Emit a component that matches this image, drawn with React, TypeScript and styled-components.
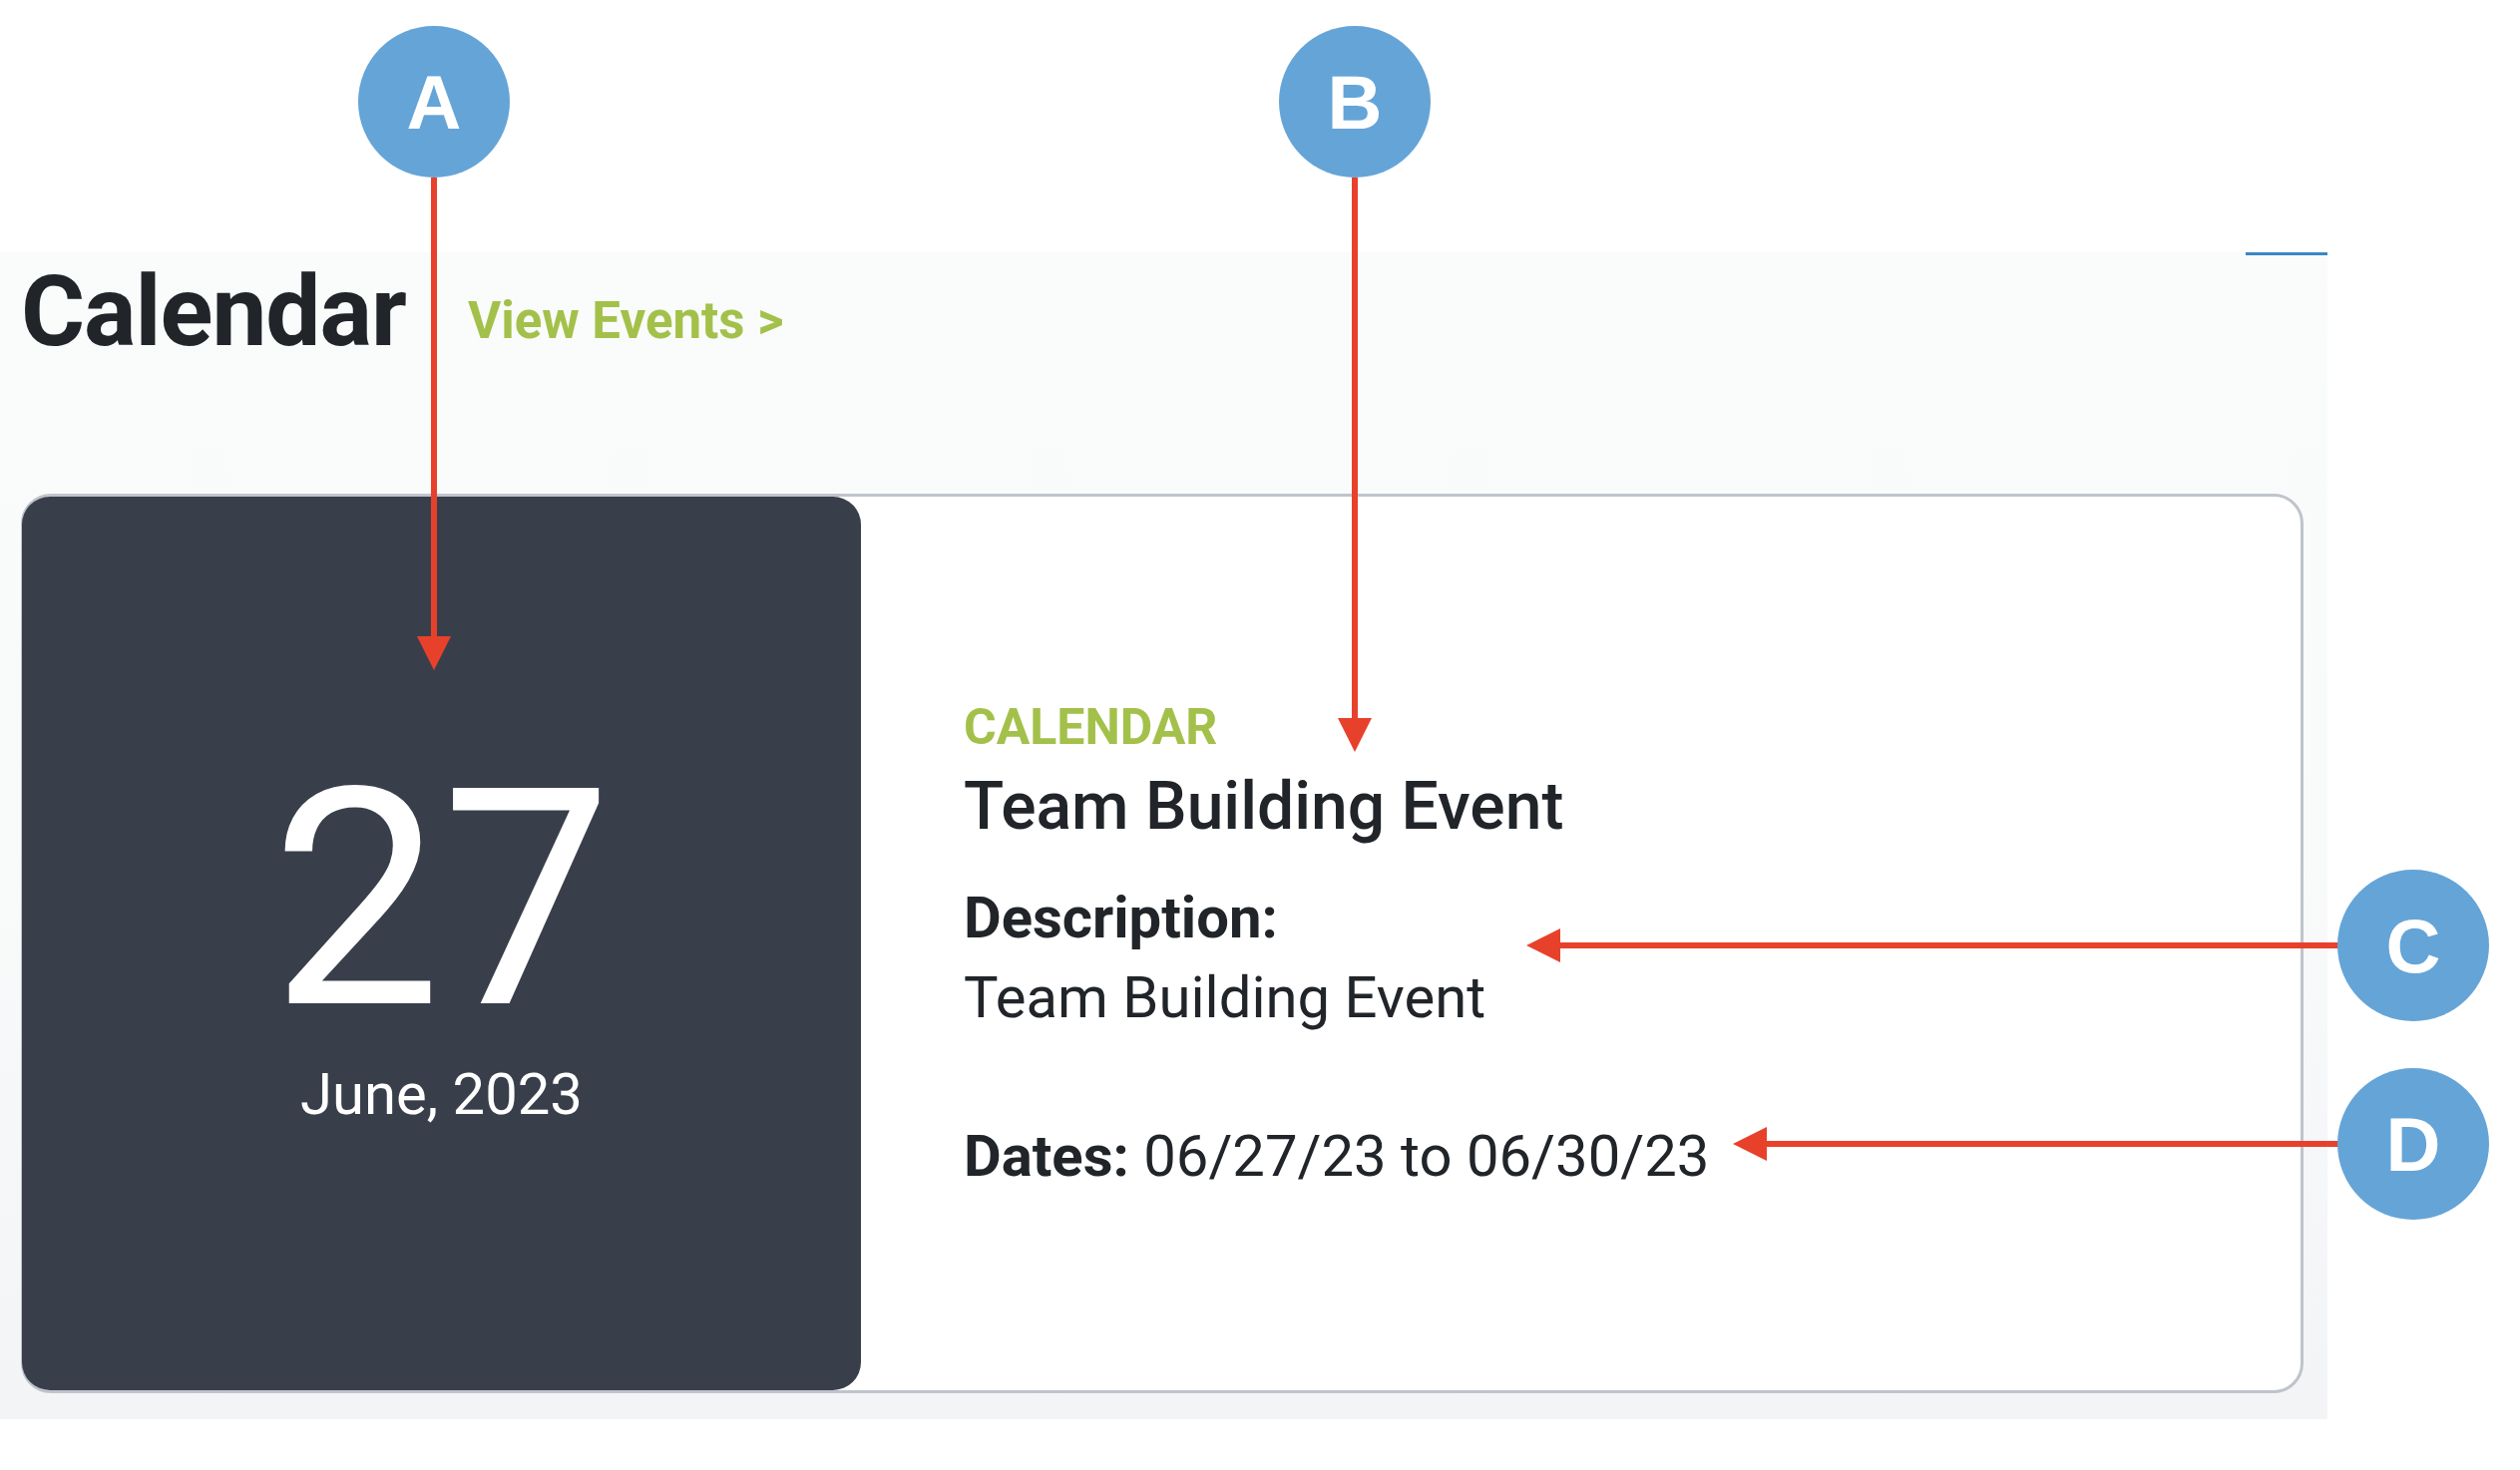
import styled, { createGlobalStyle } from "styled-components";

const GlobalStyle = createGlobalStyle`
  html, body {
    margin: 0;
    padding: 0;
    background: #ffffff;
  }
  body {
    font-family: Roboto, "Liberation Sans", sans-serif;
    color: #212529;
  }
`;

const COLOR = {
  ink: "#212529",
  green: "#a3c14a",
  tile: "#393f4a",
  border: "#bfc4cc",
  marker: "#65a4d7",
  arrow: "#e8412b",
};

const Page = styled.div`
  position: relative;
  width: 2526px;
  height: 1474px;
  padding-top: 253px;
  box-sizing: border-box;
  overflow: hidden;
`;

const Panel = styled.section`
  position: relative;
  width: 2333px;
  height: 1170px;
  box-sizing: border-box;
  padding: 11px 24px 26px 21px;
  display: flex;
  flex-direction: column;
  background: linear-gradient(180deg, #fafbfb 0%, #f9fafa 50%, #f3f4f6 100%);

  &::before {
    content: "";
    position: absolute;
    top: 0;
    right: 0;
    width: 82px;
    height: 3px;
    background: #3a87c2;
  }
`;

const Header = styled.div`
  display: flex;
  align-items: flex-start;
  gap: 62px;
  height: 98px;
`;

const Title = styled.h1`
  margin: 0;
  font-size: 98px;
  font-weight: 700;
  line-height: 1;
  letter-spacing: -1px;
  color: ${COLOR.ink};
`;

const ViewLink = styled.a`
  margin-top: 32px;
  font-size: 51px;
  font-weight: 700;
  line-height: 1;
  color: ${COLOR.green};
  text-decoration: none;
`;

const Card = styled.article`
  margin-top: 133px;
  height: 902px;
  box-sizing: border-box;
  display: flex;
  background: #ffffff;
  border: 3px solid ${COLOR.border};
  border-radius: 30px;
`;

const DateTile = styled.div`
  width: 841px;
  margin-left: -2px;
  flex-shrink: 0;
  box-sizing: border-box;
  padding-bottom: 16px;
  display: flex;
  flex-direction: column;
  align-items: center;
  justify-content: center;
  background: ${COLOR.tile};
  border-radius: 28px;
  color: #ffffff;
`;

const Day = styled.div`
  font-size: 304px;
  font-weight: 400;
  line-height: 1;
`;

const MonthYear = styled.div`
  margin-top: 14px;
  font-size: 58px;
  font-weight: 400;
  line-height: 1;
`;

const Details = styled.div`
  flex: 1;
  padding-left: 103px;
  display: flex;
  flex-direction: column;
  justify-content: center;
  color: ${COLOR.ink};
`;

const Category = styled.div`
  font-size: 50px;
  font-weight: 700;
  line-height: 1;
  color: ${COLOR.green};
  text-transform: uppercase;
`;

const EventName = styled.h2`
  margin: 22px 0 0;
  font-size: 66px;
  font-weight: 500;
  line-height: 1;
`;

const Line = styled.div<{ gap: number; bold?: boolean }>`
  margin-top: ${(p) => p.gap}px;
  font-size: 58px;
  font-weight: ${(p) => (p.bold ? 700 : 400)};
  line-height: 1;
`;

const Label = styled.b`
  font-weight: 700;
`;

const Overlay = styled.svg`
  position: absolute;
  top: 0;
  left: 0;
  pointer-events: none;
`;

const MarkerText = styled.text`
  font-family: "Liberation Sans", Arial, sans-serif;
  font-weight: 700;
  font-size: 76px;
  fill: #ffffff;
`;

type Marker = { letter: string; cx: number; cy: number };

const MARKERS: Marker[] = [
  { letter: "A", cx: 435, cy: 102 },
  { letter: "B", cx: 1358, cy: 102 },
  { letter: "C", cx: 2419, cy: 948 },
  { letter: "D", cx: 2419, cy: 1147 },
];

function Annotations() {
  const r = 76;
  return (
    <Overlay width={2526} height={1474} viewBox="0 0 2526 1474">
      <g stroke={COLOR.arrow} strokeWidth={6}>
        <line x1={435} y1={178} x2={435} y2={640} />
        <line x1={1358} y1={178} x2={1358} y2={722} />
        <line x1={2344} y1={948} x2={1562} y2={948} />
        <line x1={2344} y1={1147} x2={1769} y2={1147} />
      </g>
      <g fill={COLOR.arrow}>
        <polygon points="418,638 452,638 435,672" />
        <polygon points="1341,720 1375,720 1358,754" />
        <polygon points="1564,931 1564,965 1530,948" />
        <polygon points="1771,1130 1771,1164 1737,1147" />
      </g>
      {MARKERS.map((m) => (
        <g key={m.letter}>
          <circle cx={m.cx} cy={m.cy} r={r} fill={COLOR.marker} />
          <MarkerText x={m.cx} y={m.cy + 27} textAnchor="middle">
            {m.letter}
          </MarkerText>
        </g>
      ))}
    </Overlay>
  );
}

export default function App() {
  return (
    <>
      <GlobalStyle />
      <Page>
        <Panel>
          <Header>
            <Title>Calendar</Title>
            <ViewLink href="#">View Events &gt;</ViewLink>
          </Header>
          <Card>
            <DateTile>
              <Day>27</Day>
              <MonthYear>June, 2023</MonthYear>
            </DateTile>
            <Details>
              <Category>Calendar</Category>
              <EventName>Team Building Event</EventName>
              <Line gap={49} bold>
                Description:
              </Line>
              <Line gap={22}>Team Building Event</Line>
              <Line gap={101}>
                <Label>Dates:</Label> 06/27/23 to 06/30/23
              </Line>
            </Details>
          </Card>
        </Panel>
        <Annotations />
      </Page>
    </>
  );
}
